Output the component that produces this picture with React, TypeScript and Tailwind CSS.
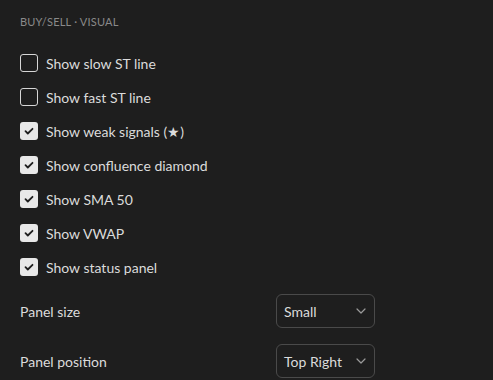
import React from 'react';

const options: { label: string; checked: boolean }[] = [
  { label: 'Show slow ST line', checked: false },
  { label: 'Show fast ST line', checked: false },
  { label: 'Show weak signals (★)', checked: true },
  { label: 'Show confluence diamond', checked: true },
  { label: 'Show SMA 50', checked: true },
  { label: 'Show VWAP', checked: true },
  { label: 'Show status panel', checked: true },
];

const Checkbox: React.FC<{ checked: boolean }> = ({ checked }) =>
  checked ? (
    <span className="w-[18px] h-[18px] rounded-[3px] bg-[#e8e8e8] flex items-center justify-center shrink-0">
      <svg width="12" height="12" viewBox="0 0 12 12" fill="none">
        <path d="M2.5 6.2l2.3 2.3L9.5 3.8" stroke="#1e1e1e" strokeWidth="1.8" strokeLinecap="round" strokeLinejoin="round" />
      </svg>
    </span>
  ) : (
    <span className="w-[18px] h-[18px] rounded-[3px] border border-[#d6d6d6] shrink-0" />
  );

const Select: React.FC<{ value: string }> = ({ value }) => (
  <div className="w-[99px] h-[34px] rounded-[6px] border border-[#4a4a4a] flex items-center justify-between pl-[7px] pr-[8px]">
    <span>{value}</span>
    <svg width="10" height="6" viewBox="0 0 10 6" fill="none">
      <path d="M1 1l4 4 4-4" stroke="#9a9a9a" strokeWidth="1.2" strokeLinecap="round" strokeLinejoin="round" />
    </svg>
  </div>
);

export default function App() {
  return (
    <div
      className="w-[493px] h-[380px] bg-[#1e1e1e] text-[#dbdbdb] px-5 overflow-hidden text-[14px]"
      style={{ fontFamily: 'Lato, "Open Sans", sans-serif' }}
    >
      <div className="pt-[14px] h-[46px] text-[11px] text-[#8a8a8a] tracking-[0.2px]">BUY/SELL · VISUAL</div>
      <div className="flex flex-col">
        {options.map((o) => (
          <label key={o.label} className="h-[34px] flex items-center gap-2">
            <Checkbox checked={o.checked} />
            <span>{o.label}</span>
          </label>
        ))}
      </div>
      <div className="mt-[10px] flex flex-col gap-4">
        <div className="flex items-center">
          <span className="w-[256px]">Panel size</span>
          <Select value="Small" />
        </div>
        <div className="flex items-center">
          <span className="w-[256px]">Panel position</span>
          <Select value="Top Right" />
        </div>
      </div>
    </div>
  );
}
